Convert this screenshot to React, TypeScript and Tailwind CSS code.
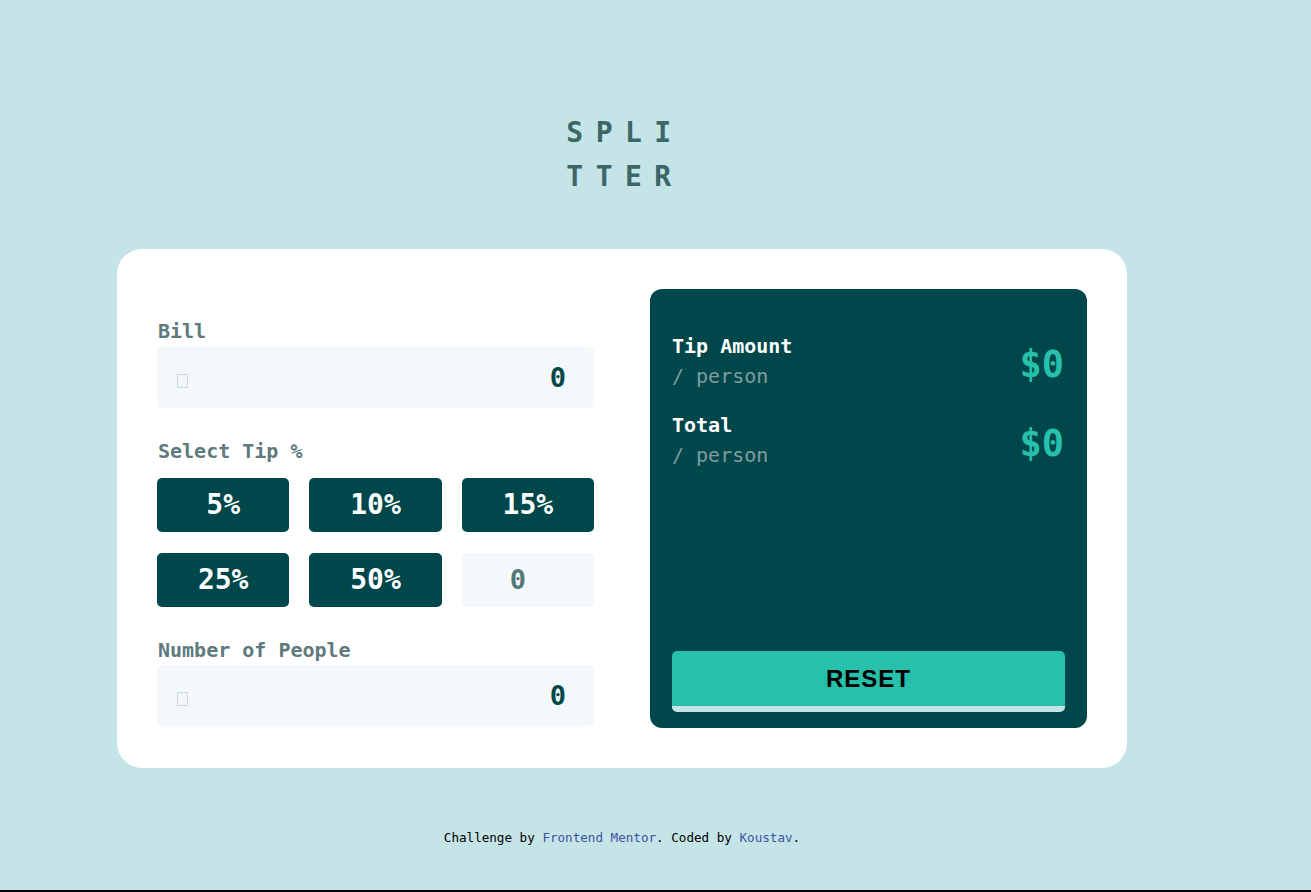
import React from 'react';

const mono = "font-['DejaVu_Sans_Mono','Liberation_Mono',monospace]";

const Tofu: React.FC = () => (
  <span className="inline-block w-[11px] h-[14px] border border-[#c9d9db] mt-[6px]" />
);

const NumberInput: React.FC<{ className?: string }> = ({ className = '' }) => (
  <div
    className={`h-[61px] rounded-[5px] bg-[#f3f9fa] flex items-center justify-between pl-[20px] pr-[28px] ${className}`}
  >
    <Tofu />
    <span className="text-[27px] font-bold text-[#00474b] pt-[2px]">0</span>
  </div>
);

const ResultRow: React.FC<{ label: string; className?: string }> = ({ label, className = '' }) => (
  <div className={`flex items-start justify-between ${className}`}>
    <div>
      <p className="text-[20px] leading-[30px] font-bold text-white">{label}</p>
      <p className="text-[20px] leading-[30px] text-[#7f9d9f]">/ person</p>
    </div>
    <span className="block h-[60px] text-[37px] leading-[68px] font-bold text-[#26c0ab] pr-px">$0</span>
  </div>
);

const tips = ['5%', '10%', '15%', '25%', '50%'];

export default function App() {
  return (
    <div
      className={`min-h-[892px] bg-[#c5e4e7] border-b-2 border-black flex flex-col items-center pr-[67px] ${mono}`}
    >
      {/* Logo */}
      <h1 className="mt-[111px] ml-[6px] w-[140px] text-center text-[28px] leading-[44px] font-bold tracking-[12.5px] text-[#3d6666] break-all">
        SPLITTER
      </h1>

      {/* Card */}
      <main className="mt-[50px] w-[1010px] h-[519px] bg-white rounded-[25px] p-[40px] flex gap-[56px]">
        {/* Inputs */}
        <section className="w-[437px] pt-[30px] flex flex-col">
          <label className="text-[20px] leading-[24px] font-bold text-[#5e7a7d] pl-px">Bill</label>
          <NumberInput className="mt-[4px]" />

          <label className="mt-[31px] text-[20px] leading-[24px] font-bold text-[#5e7a7d] pl-px">
            Select Tip %
          </label>
          <div className="mt-[15px] grid grid-cols-3 gap-x-[20px] gap-y-[21px]">
            {tips.map((t) => (
              <button
                key={t}
                className="h-[54px] rounded-[5px] bg-[#00474b] text-white text-[28px] font-bold"
              >
                {t}
              </button>
            ))}
            <div className="h-[54px] rounded-[5px] bg-[#f3f9fa] flex items-center justify-center text-[27px] font-bold text-[#547878] pr-[20px]">
              0
            </div>
          </div>

          <label className="mt-[31px] text-[20px] leading-[24px] font-bold text-[#5e7a7d] pl-px">
            Number of People
          </label>
          <NumberInput className="mt-[3px]" />
        </section>

        {/* Results */}
        <section className="w-[437px] h-full rounded-[12px] bg-[#00474b] pt-[42px] pb-[16px] px-[22px] flex flex-col">
          <ResultRow label="Tip Amount" />
          <ResultRow label="Total" className="mt-[19px]" />

          <button className="mt-auto h-[61px] rounded-[5px] bg-[#26c0ab] border-b-[6px] border-[#c5e4e7] font-['Liberation_Sans',Arial,sans-serif] text-[24px] font-bold tracking-[1px] text-black">
            RESET
          </button>
        </section>
      </main>

      {/* Footer */}
      <footer className="mt-[62px] text-[12.6px] leading-[16px] text-black">
        Challenge by <a className="text-[#3e52a3]">Frontend Mentor</a>. Coded by{' '}
        <a className="text-[#3e52a3]">Koustav</a>.
      </footer>
    </div>
  );
}
